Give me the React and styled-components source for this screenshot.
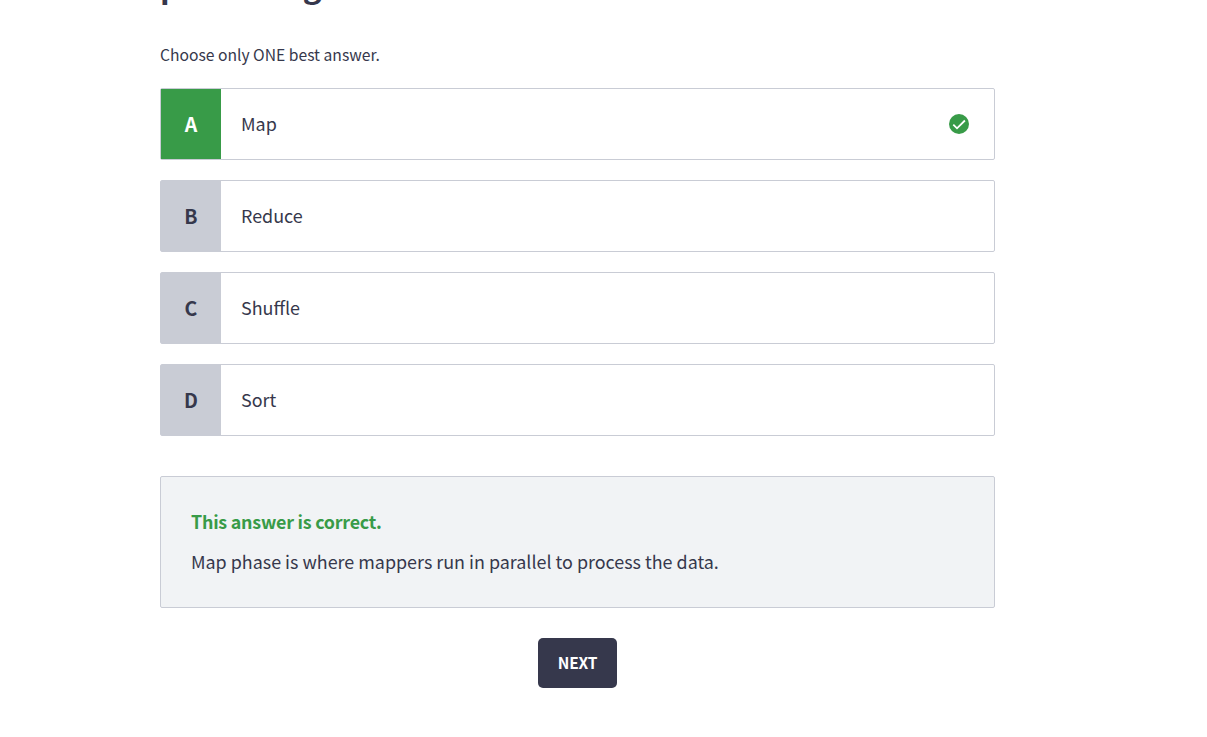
import React from "react";
import styled, { createGlobalStyle } from "styled-components";

const GlobalStyle = createGlobalStyle`
  * { box-sizing: border-box; }
  html, body { margin: 0; height: 737px; overflow: hidden; background: #fff; }
  body { font-family: "Source Sans Pro", "Noto Sans CJK SC", sans-serif; color: #36384c; }
`;

const Page = styled.main`
  width: 835px;
  height: 737px;
  margin-left: 160px;
  overflow: hidden;
  display: flex;
  flex-direction: column;
`;

const Heading = styled.h1`
  margin: -42px 0 0;
  height: 53px;
  flex: none;
  font-size: 31.5px;
  line-height: 53px;
  font-weight: 700;
  letter-spacing: -0.6px;
`;

const Hint = styled.p`
  margin: 32px 0 21px;
  font-size: 15.67px;
  line-height: 24px;
`;

const Options = styled.ul`
  display: flex;
  flex-direction: column;
  gap: 20px;
  margin: 0;
  padding: 0;
  list-style: none;
`;

const Option = styled.li`
  display: flex;
  align-items: center;
  height: 72px;
  padding-right: 25px;
  border: 1px solid #c9ccd5;
  border-radius: 2px;
`;

const Letter = styled.span`
  display: flex;
  align-items: center;
  justify-content: center;
  width: 60px;
  height: 70px;
  padding-bottom: 2px;
  font-size: 19.5px;
  font-weight: 700;
  color: ${(p) => (p.$correct ? "#fff" : "#36384c")};
  background: ${(p) => (p.$correct ? "#389b48" : "#c9ccd5")};
`;

const Label = styled.span`
  flex: 1;
  padding: 0 0 2px 20px;
  font-size: 17.93px;
  line-height: 30px;
`;

const CheckIcon = styled.svg`
  width: 20px;
  height: 20px;
  flex: none;
`;

const Feedback = styled.section`
  flex: none;
  height: 132px;
  margin-top: 40px;
  padding: 29px 30px;
  background: #f1f3f5;
  border: 1px solid #c9ccd5;
  border-radius: 2px;
`;

const Verdict = styled.p`
  margin: 0 0 10px;
  font-size: 17.9px;
  line-height: 30px;
  font-weight: 700;
  letter-spacing: -0.24px;
  color: #389b48;
`;

const Explanation = styled.p`
  margin: 0;
  font-size: 17.92px;
  line-height: 30px;
`;

const NextButton = styled.button`
  align-self: center;
  flex: none;
  width: 79px;
  height: 50px;
  margin-top: 30px;
  padding: 0 0 2px;
  border: 0;
  border-radius: 5px;
  background: #36384c;
  color: #fff;
  font-family: inherit;
  font-size: 15.5px;
  font-weight: 700;
  letter-spacing: -0.15px;
`;

const options = [
  { letter: "A", text: "Map", correct: true },
  { letter: "B", text: "Reduce" },
  { letter: "C", text: "Shuffle" },
  { letter: "D", text: "Sort" },
];

export default function App() {
  return (
    <>
      <GlobalStyle />
      <Page>
        <Heading>processing</Heading>
        <Hint>Choose only ONE best answer.</Hint>
        <Options>
          {options.map((o) => (
            <Option key={o.letter}>
              <Letter $correct={o.correct}>{o.letter}</Letter>
              <Label>{o.text}</Label>
              {o.correct && (
                <CheckIcon viewBox="0 0 20 20" aria-label="Correct">
                  <circle cx="10" cy="10" r="10" fill="#389b48" />
                  <path d="M4.3 10.7 8 14.3 15.9 6.5" fill="none" stroke="#fff" strokeWidth="1.8" />
                </CheckIcon>
              )}
            </Option>
          ))}
        </Options>
        <Feedback>
          <Verdict>This answer is correct.</Verdict>
          <Explanation>Map phase is where mappers run in parallel to process the data.</Explanation>
        </Feedback>
        <NextButton>NEXT</NextButton>
      </Page>
    </>
  );
}
